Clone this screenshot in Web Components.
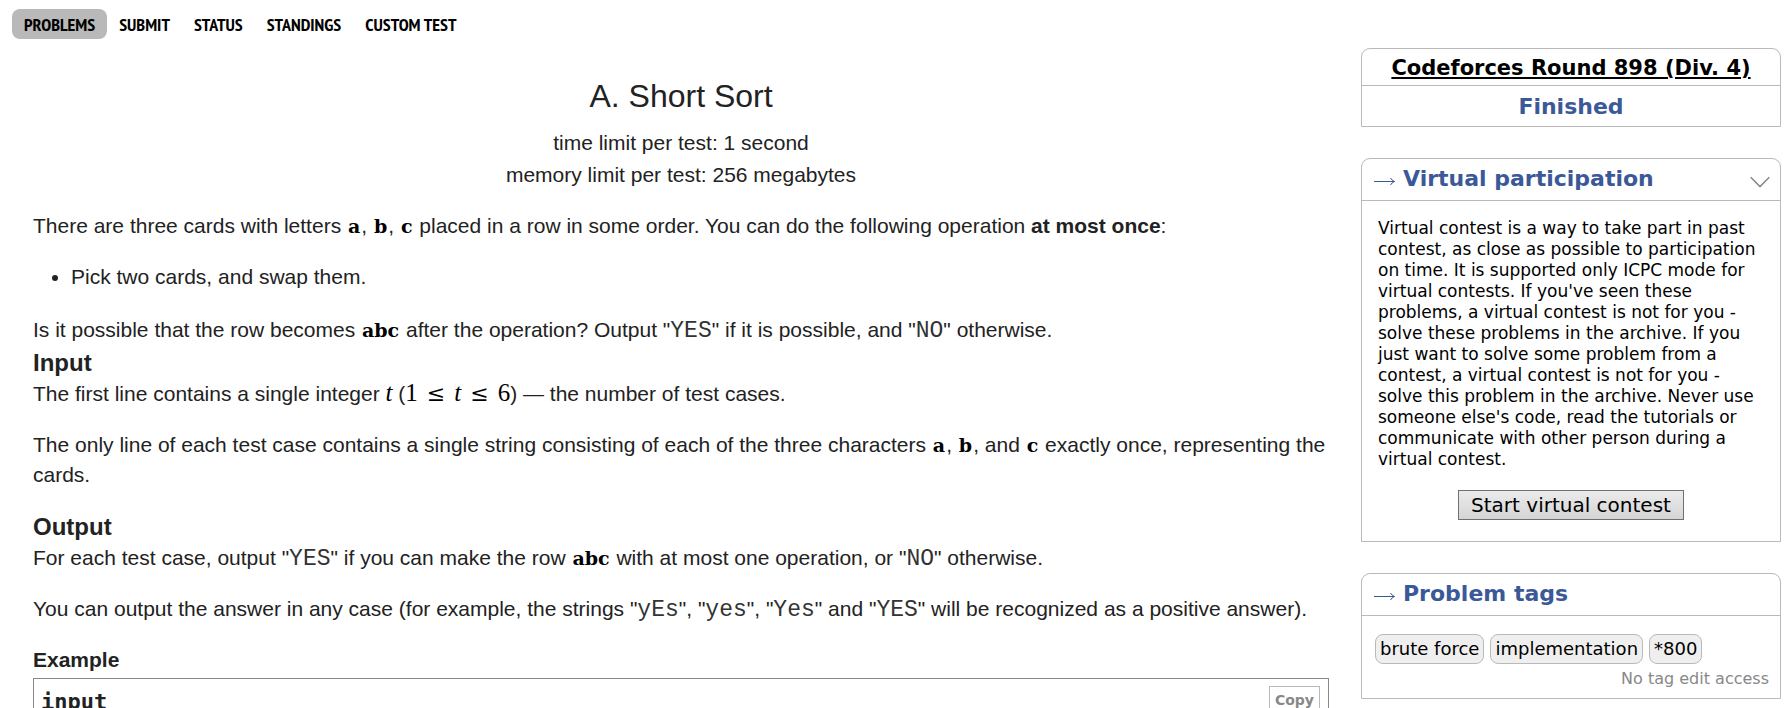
<!DOCTYPE html>
<html lang="en">
<head>
<meta charset="utf-8">
<title>Problem - A - Codeforces</title>
<style>
body { margin: 0; background: #fff; color: #000; font-family: "DejaVu Sans", sans-serif; }
</style>
</head>
<body>
<problem-page></problem-page>

<template id="page-tpl">
<style>
:host { display: block; }
.columns { display: grid; grid-template-columns: minmax(0, 1fr) 420px; column-gap: 32px; padding: 0 6px 0 33px; }
aside { display: flex; flex-direction: column; padding-top: 9px; }
side-box + side-box { margin-top: 31px; }
.round { padding-top: 2px; text-align: center; font-weight: bold; font-size: 21px; line-height: 34px; }
.round a { color: #000; text-underline-offset: 2px; }
.state { border-top: 1px solid #b9b9b9; color: #3b5998; font-size: 22px; line-height: 38px; }
.about { margin: 0; padding: 17px 16px 0; font-size: 17px; line-height: 21px; }
.start { display: block; margin: 20px auto 21px; height: 30px; padding: 0 12px; border: 1px solid #707070; background: linear-gradient(#ebebeb, #d5d5d5); color: #000; font: 20px "DejaVu Sans", sans-serif; }
.tags { display: flex; flex-wrap: wrap; gap: 6px; padding: 18px 13px 0; }
.note { margin: 0; padding: 5px 11px 9px; text-align: right; color: #888; font-size: 16px; line-height: 20px; }
</style>
<nav-menu></nav-menu>
<div class="columns">
  <problem-statement></problem-statement>
  <aside>
    <side-box>
      <div class="round"><a href="#contest">Codeforces Round 898 (Div. 4)</a></div>
      <div class="round state">Finished</div>
    </side-box>
    <side-box caption="Virtual participation" collapsible>
      <p class="about">Virtual contest is a way to take part in past contest, as close as possible to participation on time. It is supported only ICPC mode for virtual contests. If you've seen these problems, a virtual contest is not for you - solve these problems in the archive. If you just want to solve some problem from a contest, a virtual contest is not for you - solve this problem in the archive. Never use someone else's code, read the tutorials or communicate with other person during a virtual contest.</p>
      <button class="start" type="button">Start virtual contest</button>
    </side-box>
    <side-box caption="Problem tags">
      <div class="tags">
        <tag-chip>brute force</tag-chip>
        <tag-chip>implementation</tag-chip>
        <tag-chip>*800</tag-chip>
      </div>
      <p class="note">No tag edit access</p>
    </side-box>
  </aside>
</div>
</template>

<template id="nav-tpl">
<style>
:host { display: block; padding: 9px 12px 0; }
nav { display: flex; }
a { padding: 2px 12px 0; border-radius: 8px; color: #000; text-decoration: none; font: bold 18px/28px "PT Sans Narrow", "Open Sans Condensed", sans-serif; }
a[aria-current] { background: #b9b9b9; }
</style>
<nav>
  <a href="#problems" aria-current="page">PROBLEMS</a>
  <a href="#submit">SUBMIT</a>
  <a href="#status">STATUS</a>
  <a href="#standings">STANDINGS</a>
  <a href="#customtest">CUSTOM TEST</a>
</nav>
</template>

<template id="box-tpl">
<style>
:host { display: block; border: 1px solid #b9b9b9; border-radius: 9px 9px 0 0; }
header { display: flex; align-items: center; padding: 0 10px 0 12px; height: 41px; border-bottom: 1px solid #b9b9b9; }
:host(:not([caption])) header, :host(:not([collapsible])) button { display: none; }
h2 { flex: 1; display: flex; align-items: center; gap: 8px; margin: 0; padding-bottom: 1px; color: #3b5998; font-size: 22px; line-height: 30px; font-weight: bold; }
.arrow { margin-top: 5px; }
button { display: flex; padding: 4px 0 0; border: 0; background: none; }
svg { display: block; }
</style>
<header>
  <h2><svg class="arrow" aria-hidden="true" width="21" height="9" viewBox="0 0 21 9" fill="none" stroke="#3b5998"><path d="M0 4.5H20.5M16.5 1Q17.8 3.4 20.5 4.5 17.8 5.6 16.5 8"/></svg><span class="caption"></span></h2>
  <button type="button" aria-label="Collapse"><svg width="20" height="12" viewBox="0 0 20 12" fill="none" stroke="#888" stroke-width="1.5"><path d="M.7 1.2 10 10.6 19.3 1.2"/></svg></button>
</header>
<slot></slot>
</template>

<template id="chip-tpl">
<style>
:host { display: block; padding: 0 4px; border: 1px solid #b9b9b9; border-radius: 8px; background: #efefef; font-size: 18px; line-height: 28px; }
</style>
<slot></slot>
</template>

<template id="statement-tpl">
<style>
:host { display: block; padding-top: 32px; color: #222; font: 21px/30px "Liberation Sans", Arial, sans-serif; }
.head { margin-bottom: 20px; text-align: center; }
h1 { margin: 0 0 6px; font-size: 32px; line-height: 50px; font-weight: normal; }
.limit { line-height: 32px; }
p, ul { margin: 0 0 21px; }
ul { padding-left: 38px; }
h2 { margin: 0; font-size: 24px; line-height: 32px; }
h3 { margin: 0 0 3px; font-size: 21px; line-height: 30px; }
ul { margin-bottom: 23px; }
.before-heading { margin-bottom: 2px; }
code { color: #333; font: 23px/1 "Liberation Mono", "Courier New", monospace; }
b.tt { padding: 0 1px; color: #000; font: bold 19px/1 "DejaVu Serif", serif; }
.m { color: #000; font-family: "Liberation Serif", serif; font-size: 25px; line-height: 1; }
.rel { margin: 0 9px; font-family: "DejaVu Serif", serif; font-size: 22px; }
</style>
<div class="head">
  <h1>A. Short Sort</h1>
  <div class="limit">time limit per test: 1 second</div>
  <div class="limit">memory limit per test: 256 megabytes</div>
</div>
<p>There are three cards with letters <b class="tt">a</b>, <b class="tt">b</b>, <b class="tt">c</b> placed in a row in some order. You can do the following operation <b>at most once</b>:</p>
<ul><li>Pick two cards, and swap them.</li></ul>
<p class="before-heading">Is it possible that the row becomes <b class="tt">abc</b> after the operation? Output "<code>YES</code>" if it is possible, and "<code>NO</code>" otherwise.</p>
<h2>Input</h2>
<p>The first line contains a single integer <i class="m">t</i> (<span class="m">1<span class="rel">≤</span><i>t</i><span class="rel">≤</span>6</span>) — the number of test cases.</p>
<p>The only line of each test case contains a single string consisting of each of the three characters <b class="tt">a</b>, <b class="tt">b</b>, and <b class="tt">c</b> exactly once, representing the cards.</p>
<h2>Output</h2>
<p>For each test case, output "<code>YES</code>" if you can make the row <b class="tt">abc</b> with at most one operation, or "<code>NO</code>" otherwise.</p>
<p>You can output the answer in any case (for example, the strings "<code>yEs</code>", "<code>yes</code>", "<code>Yes</code>" and "<code>YES</code>" will be recognized as a positive answer).</p>
<h3>Example</h3>
<sample-block label="input"></sample-block>
</template>

<template id="sample-tpl">
<style>
:host { display: block; border: 1px solid #888; }
.title { display: flex; justify-content: space-between; align-items: flex-start; padding: 7px 8px 0 7px; }
.label { font: bold 22px/32px "DejaVu Sans Mono", monospace; }
button { padding: 0 5px; border: 1px solid #b9b9b9; background: none; color: #888; font: bold 14px/26px "DejaVu Sans", sans-serif; }
</style>
<div class="title"><span class="label"></span><button type="button">Copy</button></div>
</template>

<script>
function attach(el, id) {
  const root = el.attachShadow({ mode: "open" });
  root.append(document.getElementById(id).content.cloneNode(true));
  return root;
}
class NavMenu extends HTMLElement {
  constructor() { super(); attach(this, "nav-tpl"); }
}
class SideBox extends HTMLElement {
  connectedCallback() {
    if (this.shadowRoot) return;
    attach(this, "box-tpl").querySelector(".caption").textContent = this.getAttribute("caption") || "";
  }
}
class TagChip extends HTMLElement {
  constructor() { super(); attach(this, "chip-tpl"); }
}
class SampleBlock extends HTMLElement {
  connectedCallback() {
    if (this.shadowRoot) return;
    attach(this, "sample-tpl").querySelector(".label").textContent = this.getAttribute("label");
  }
}
class ProblemStatement extends HTMLElement {
  constructor() { super(); attach(this, "statement-tpl"); }
}
class ProblemPage extends HTMLElement {
  constructor() { super(); attach(this, "page-tpl"); }
}
customElements.define("nav-menu", NavMenu);
customElements.define("side-box", SideBox);
customElements.define("tag-chip", TagChip);
customElements.define("sample-block", SampleBlock);
customElements.define("problem-statement", ProblemStatement);
customElements.define("problem-page", ProblemPage);
</script>
</body>
</html>
